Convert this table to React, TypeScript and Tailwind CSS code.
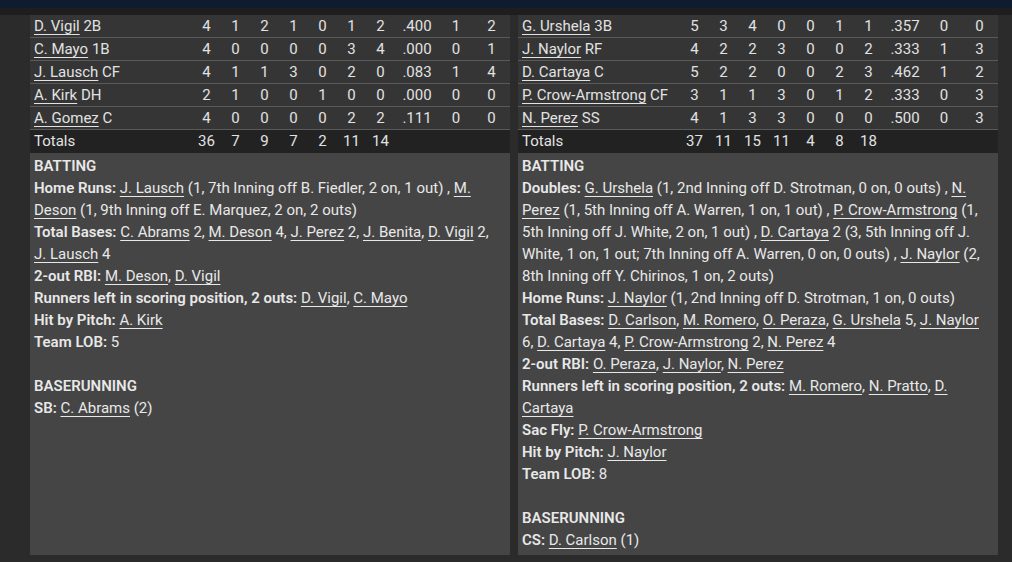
import React from "react";

type Row = { name: string; pos: string; stats: string[] };

const away: Row[] = [
  { name: "D. Vigil", pos: "2B", stats: ["4", "1", "2", "1", "0", "1", "2", ".400", "1", "2"] },
  { name: "C. Mayo", pos: "1B", stats: ["4", "0", "0", "0", "0", "3", "4", ".000", "0", "1"] },
  { name: "J. Lausch", pos: "CF", stats: ["4", "1", "1", "3", "0", "2", "0", ".083", "1", "4"] },
  { name: "A. Kirk", pos: "DH", stats: ["2", "1", "0", "0", "1", "0", "0", ".000", "0", "0"] },
  { name: "A. Gomez", pos: "C", stats: ["4", "0", "0", "0", "0", "2", "2", ".111", "0", "0"] },
];

const home: Row[] = [
  { name: "G. Urshela", pos: "3B", stats: ["5", "3", "4", "0", "0", "1", "1", ".357", "0", "0"] },
  { name: "J. Naylor", pos: "RF", stats: ["4", "2", "2", "3", "0", "0", "2", ".333", "1", "3"] },
  { name: "D. Cartaya", pos: "C", stats: ["5", "2", "2", "0", "0", "2", "3", ".462", "1", "2"] },
  { name: "P. Crow-Armstrong", pos: "CF", stats: ["3", "1", "1", "3", "0", "1", "2", ".333", "0", "3"] },
  { name: "N. Perez", pos: "SS", stats: ["4", "1", "3", "3", "0", "0", "0", ".500", "0", "3"] },
];

// [Name] marks a linked player
type Note = { label: string; text: string };

const awayBatting: Note[] = [
  { label: "Home Runs:", text: "[J. Lausch] (1, 7th Inning off B. Fiedler, 2 on, 1 out) , [M. Deson] (1, 9th Inning off E. Marquez, 2 on, 2 outs)" },
  { label: "Total Bases:", text: "[C. Abrams] 2, [M. Deson] 4, [J. Perez] 2, [J. Benita], [D. Vigil] 2, [J. Lausch] 4" },
  { label: "2-out RBI:", text: "[M. Deson], [D. Vigil]" },
  { label: "Runners left in scoring position, 2 outs:", text: "[D. Vigil], [C. Mayo]" },
  { label: "Hit by Pitch:", text: "[A. Kirk]" },
  { label: "Team LOB:", text: "5" },
];

const homeBatting: Note[] = [
  { label: "Doubles:", text: "[G. Urshela] (1, 2nd Inning off D. Strotman, 0 on, 0 outs) , [N. Perez] (1, 5th Inning off A. Warren, 1 on, 1 out) , [P. Crow-Armstrong] (1, 5th Inning off J. White, 2 on, 1 out) , [D. Cartaya] 2 (3, 5th Inning off J. White, 1 on, 1 out; 7th Inning off A. Warren, 0 on, 0 outs) , [J. Naylor] (2, 8th Inning off Y. Chirinos, 1 on, 2 outs)" },
  { label: "Home Runs:", text: "[J. Naylor] (1, 2nd Inning off D. Strotman, 1 on, 0 outs)" },
  { label: "Total Bases:", text: "[D. Carlson], [M. Romero], [O. Peraza], [G. Urshela] 5, [J. Naylor] 6, [D. Cartaya] 4, [P. Crow-Armstrong] 2, [N. Perez] 4" },
  { label: "2-out RBI:", text: "[O. Peraza], [J. Naylor], [N. Perez]" },
  { label: "Runners left in scoring position, 2 outs:", text: "[M. Romero], [N. Pratto], [D. Cartaya]" },
  { label: "Sac Fly:", text: "[P. Crow-Armstrong]" },
  { label: "Hit by Pitch:", text: "[J. Naylor]" },
  { label: "Team LOB:", text: "8" },
];

const cols = "grid grid-cols-[162px_repeat(7,29px)_44px_34px_37px] items-center";

function Linked({ text }: { text: string }) {
  return (
    <>
      {text.split(/(\[[^\]]+\])/).map((part, i) =>
        part.startsWith("[") ? (
          <a key={i} href="#" className="underline underline-offset-[3px] decoration-1">
            {part.slice(1, -1)}
          </a>
        ) : (
          <span key={i}>{part}</span>
        ),
      )}
    </>
  );
}

function Panel({
  rows,
  totals,
  batting,
  baserunning,
}: {
  rows: Row[];
  totals: string[];
  batting: Note[];
  baserunning: Note;
}) {
  return (
    <div className="flex w-[480px] flex-col">
      {rows.map((r) => (
        <div key={r.name} className={`${cols} h-[23px] border-b border-[#5a5a5a] bg-[#353535] text-[#e2e2e2]`}>
          <div className="truncate pl-1">
            <a href="#" className="underline underline-offset-[3px] decoration-1">
              {r.name}
            </a>{" "}
            {r.pos}
          </div>
          {r.stats.map((s, i) => (
            <div key={i} className="text-center">
              {s}
            </div>
          ))}
        </div>
      ))}
      <div className={`${cols} h-[23px] bg-[#222222] text-[#e2e2e2]`}>
        <div className="pl-1">Totals</div>
        {totals.map((s, i) => (
          <div key={i} className="text-center">
            {s}
          </div>
        ))}
      </div>
      <div className="flex-1 bg-[#454545] pt-[2px] pr-3 pl-1 leading-[22px] text-[#e8e8e8]">
        <div className="font-semibold">BATTING</div>
        {batting.map((n) => (
          <div key={n.label}>
            <span className="font-semibold">{n.label}</span> <Linked text={n.text} />
          </div>
        ))}
        <div className="mt-[22px] font-semibold">BASERUNNING</div>
        <div>
          <span className="font-semibold">{baserunning.label}</span> <Linked text={baserunning.text} />
        </div>
      </div>
    </div>
  );
}

export default function App() {
  return (
    <div className="flex h-[562px] w-[1012px] flex-col overflow-hidden bg-[#2b2b2b] font-['Roboto',sans-serif] text-[15px]">
      <div className="h-2 shrink-0 bg-[#0f1c30]" />
      <div className="h-[7px] shrink-0 bg-[#1e1e1e]" />
      <div className="flex h-[540px] gap-2 pl-[30px]">
        <Panel
          rows={away}
          totals={["36", "7", "9", "7", "2", "11", "14"]}
          batting={awayBatting}
          baserunning={{ label: "SB:", text: "[C. Abrams] (2)" }}
        />
        <Panel
          rows={home}
          totals={["37", "11", "15", "11", "4", "8", "18"]}
          batting={homeBatting}
          baserunning={{ label: "CS:", text: "[D. Carlson] (1)" }}
        />
      </div>
    </div>
  );
}
